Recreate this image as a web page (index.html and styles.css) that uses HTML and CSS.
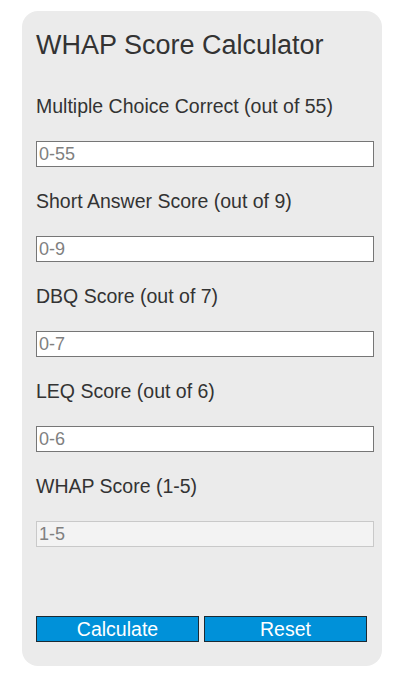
FILE: index.html
```html
<!DOCTYPE html>
<html lang="en">
<head>
  <meta charset="UTF-8">
  <title>WHAP Score Calculator</title>
  <link rel="stylesheet" href="styles.css">
</head>
<body>
  <div class="calc">
    <h2 class="calc-title">WHAP Score Calculator</h2>

    <div class="field">
      <label for="mc">Multiple Choice Correct (out of 55)</label>
      <input type="text" id="mc" placeholder="0-55">
    </div>

    <div class="field">
      <label for="saq">Short Answer Score (out of 9)</label>
      <input type="text" id="saq" placeholder="0-9">
    </div>

    <div class="field">
      <label for="dbq">DBQ Score (out of 7)</label>
      <input type="text" id="dbq" placeholder="0-7">
    </div>

    <div class="field">
      <label for="leq">LEQ Score (out of 6)</label>
      <input type="text" id="leq" placeholder="0-6">
    </div>

    <div class="field">
      <label for="result">WHAP Score (1-5)</label>
      <input type="text" id="result" placeholder="1-5" disabled>
    </div>

    <div class="actions">
      <button type="button" id="calc-button">Calculate</button>
      <button type="button" id="reset-button">Reset</button>
    </div>
  </div>
</body>
</html>
```

FILE: styles.css
```css
body {
  margin: 0;
  padding: 11px 0 0 22px;
  font-family: "Liberation Sans", Arial, sans-serif;
  color: #333;
  background: white;
}
.calc {
  width: 360px;
  height: 655px;
  box-sizing: border-box;
  padding: 18px 8px 0 14px;
  background-color: #ebebeb;
  border-radius: 16px;
}
.calc-title {
  margin: 0 0 33px;
  font-size: 27px;
  font-weight: normal;
  line-height: 32px;
}
.field {
  margin-bottom: 22px;
}
.field label {
  display: block;
  font-size: 19.5px;
  line-height: 24px;
  margin-bottom: 23px;
}
.field input {
  display: block;
  width: 100%;
  height: 26px;
  box-sizing: border-box;
  margin: 0;
  padding: 0 2px;
  font-family: inherit;
  font-size: 18px;
  border: 1px solid #767676;
  background: white;
  border-radius: 0;
}
.field input::placeholder {
  color: #808080;
}
.field input:disabled {
  background: #f3f3f3;
  border-color: #c9c9c9;
}
.actions {
  display: flex;
  gap: 5px;
  margin-top: 69px;
}
.actions button {
  width: 163px;
  height: 26px;
  margin: 0;
  padding: 0;
  font-family: inherit;
  font-size: 19.5px;
  color: white;
  background-color: #0091d9;
  border: 1px solid #1b2a33;
  border-radius: 0;
  cursor: pointer;
}
```
